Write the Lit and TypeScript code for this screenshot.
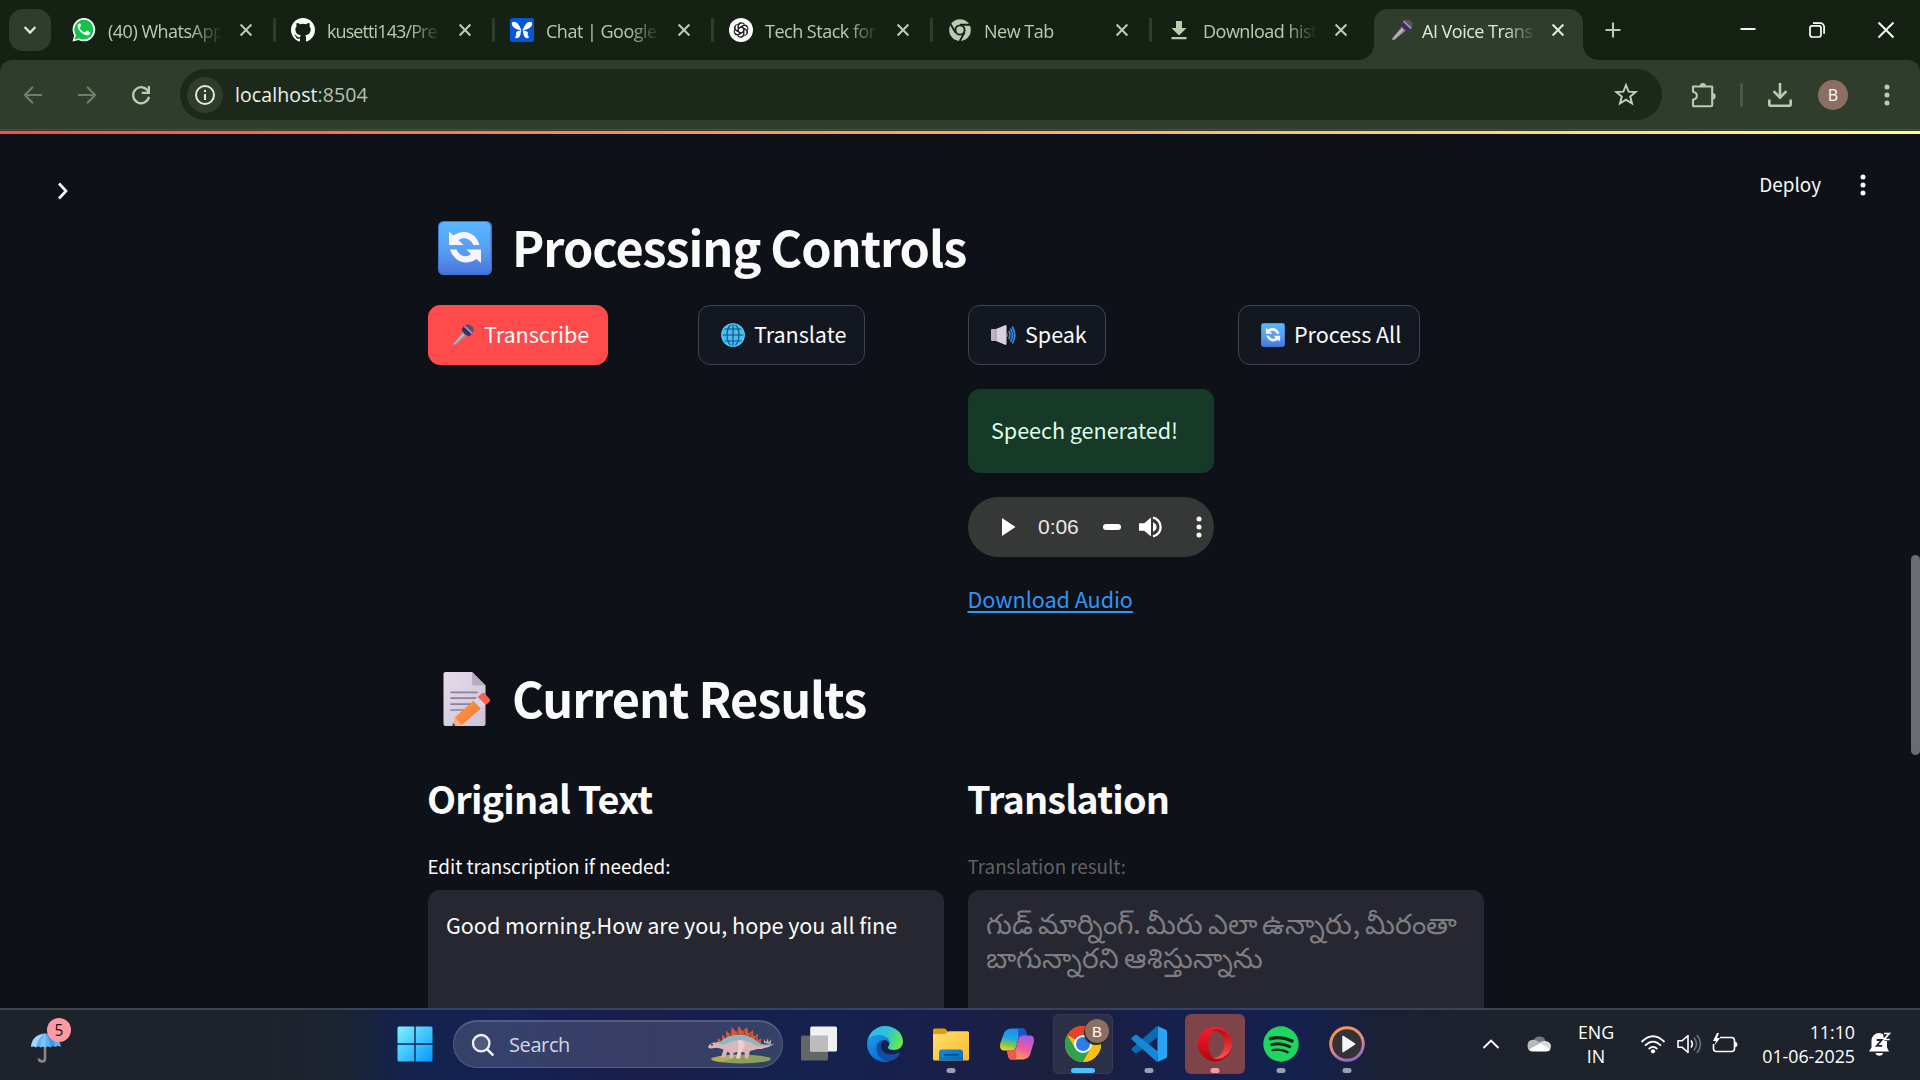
import { LitElement, html, css, svg } from "lit";
import { customElement } from "lit/decorators.js";
import { classMap } from "lit/directives/class-map.js";

const micArt = svg`
  <path d="M2.2 21.8 Q1.6 21 2.4 20 L12 8.4 L16 12.2 L5 21.6 Q3 22.8 2.2 21.8z" fill="#998f9d"/>
  <path d="M3 21 L13 9.6 L14.4 10.8 L4.2 21.2z" fill="#c4bcc8"/>
  <circle cx="17" cy="7" r="5.6" fill="#54465f"/>
  <path d="M12.4 4 L20.3 11.6 L17.6 13.4 L10.6 6.8z" fill="#3f2a63"/>
  <path d="M13.4 3 L21.2 10.4" stroke="#a79bb5" stroke-width="1.5"/>
  <path d="M15.5 2.4 L22 8.6 M18 1.6 L22.4 6" stroke="#75677f" stroke-width=".8"/>`;

const syncArt = svg`
  <defs>
    <linearGradient id="sy" x1="0" y1="0" x2="0" y2="1"><stop offset="0" stop-color="#5ab8ff"/><stop offset=".6" stop-color="#559cf3"/><stop offset="1" stop-color="#4a77dc"/></linearGradient>
  </defs>
  <rect x="0" y="0" width="54" height="54" rx="5.5" fill="#3f74d6"/>
  <rect x="1" y="1" width="51.5" height="50.5" rx="5" fill="url(#sy)"/>
  <path d="M11 10.5 L15.6 14.6 C23.5 8.5 37 9.500 41.500 24 L35.500 24 C32.500 17 25 15.500 20.500 19.200 L25.500 24 L11 24z" fill="#fbf3ff"/>
  <path d="M43 42 L38.400 37.900 C30.500 44 17 43 12 28.500 L18.500 28.500 C21.500 35.500 28.500 37 33 33 L28.500 28.500 L43 28.500z" fill="#fbf3ff"/>`;

const art = {
  whatsapp: html`<svg width="24" height="24" viewBox="0 0 24 24"><path d="M.5 23.600 L2.200 17.600 A11.300 11.700 0 1 1 6.500 21.900z" fill="#fff"/><path d="M2.400 21.700 L3.900 17.300 A9.500 9.900 0 1 1 7.200 20.400z" fill="#15c14b"/><path d="M8.700 6.300c-.4-.9-.9-.8-1.300-.8-.9.200-2 1.500-1.700 3.200.5 3.200 4.700 7.700 8.600 8.500 2 .4 3.600-.8 3.800-2 .1-.8.100-1-.4-1.300l-2.500-1.200c-.5-.2-.8 0-1.100.4l-.9 1.100c-.3.300-.5.300-.9.100-2.300-1-3.700-2.600-4.500-4.100-.2-.4 0-.6.200-.9.900-1 .9-1.200.7-1.600z" fill="#fff"/></svg>`,
  github: html`<svg width="24" height="24" viewBox="0 0 16 16"><path fill="#fff" d="M8 0C3.580 0 0 3.580 0 8c0 3.540 2.290 6.530 5.470 7.590.4.070.55-.17.55-.38 0-.19-.01-.82-.01-1.490-2.010.37-2.530-.49-2.690-.94-.09-.23-.48-.94-.82-1.130-.28-.15-.68-.52-.01-.53.63-.01 1.080.58 1.230.82.72 1.210 1.870.87 2.330.66.070-.52.28-.87.51-1.070-1.780-.2-3.640-.89-3.640-3.950 0-.87.31-1.590.82-2.150-.08-.2-.36-1.020.08-2.120 0 0 .67-.21 2.200.82a7.600 7.600 0 0 1 4 0c1.530-1.040 2.200-.82 2.200-.82.44 1.100.16 1.920.08 2.120.51.56.82 1.270.82 2.150 0 3.070-1.870 3.750-3.650 3.950.29.25.54.73.54 1.480 0 1.070-.01 1.930-.01 2.200 0 .21.15.46.55.38A8.010 8.010 0 0 0 16 8c0-4.420-3.580-8-8-8z"/></svg>`,
  butterfly: html`<svg width="24" height="24" viewBox="0 0 24 24"><rect width="24" height="24" rx="2.500" fill="#0557d6"/><g fill="#fff"><path d="M11.600 12.500C9.500 12 2 10.500 1.800 6 1.700 3 5.500 3 7.800 5.700c1.700 2 2.800 4.300 3.800 6.800z"/><path d="M12.400 12.500c2.100-.5 9.600-2 9.800-6.500.1-3-3.700-3-6-.3-1.700 2-2.800 4.300-3.800 6.800z"/><path d="M11.300 12.600c-2-.2-4.600.5-5.200 2.200-.3 1 .6 1.300.2 2.200-.5 1.200-1.600 1.500-1 2.600.8 1.300 3.500.5 4.600-1.600.8-1.600.8-3.400 1.400-5.400z"/><path d="M12.700 12.600c2-.2 4.600.5 5.200 2.200.3 1-.6 1.300-.2 2.200.5 1.200 1.600 1.500 1 2.600-.8 1.300-3.500.5-4.600-1.600-.8-1.600-.8-3.400-1.400-5.400z"/></g></svg>`,
  openai: html`<svg width="24" height="24" viewBox="0 0 24 24"><circle cx="12" cy="12" r="12" fill="#fff"/><g fill="none" stroke="#222" stroke-width="1.150" stroke-linejoin="round">${[0, 60, 120, 180, 240, 300].map(
    (a) => svg`<path transform="rotate(${a} 12 12)" d="M9.300 13.600V8.300a3.300 3.300 0 0 1 6-1.900M9.300 10.400l4.700-2.700a3.300 3.300 0 0 1 4.300 1"/>`
  )}</g></svg>`,
  chromeMono: html`<svg width="24" height="24" viewBox="0 0 24 24"><circle cx="12" cy="12" r="10.800" fill="#b9ccb1"/><circle cx="12" cy="12" r="4.600" fill="#b9ccb1" stroke="#152213" stroke-width="1.900"/><path d="M12 6.700H22M7.500 14.600L2.500 6M16.500 14.600L11.800 23" stroke="#152213" stroke-width="1.900"/></svg>`,
  downloadMono: html`<svg width="24" height="24" viewBox="0 0 24 24"><path d="M9 3h6v7h4.500L12 17.500 4.500 10H9zM4.500 19h15v2.200h-15z" fill="#b9ccb1"/></svg>`,
  mic: html`<svg width="24" height="24" viewBox="0 0 24 24">${micArt}</svg>`,
  close: html`<svg width="18" height="18" viewBox="0 0 18 18"><path d="M3.600 3.600l10.800 10.800M14.400 3.600L3.600 14.400" stroke="currentColor" stroke-width="2.100" fill="none"/></svg>`,
  chevDown: html`<svg width="18" height="18" viewBox="0 0 18 18"><path d="M3.600 6l5.400 5.500L14.400 6" stroke="#dfe8da" stroke-width="2.300" fill="none"/></svg>`,
  plus: html`<svg width="18" height="18" viewBox="0 0 18 18"><path d="M9 1.500v15M1.500 9h15" stroke="#b9ccb1" stroke-width="2.100"/></svg>`,
  back: html`<svg width="24" height="24" viewBox="0 0 24 24"><path d="M21 12H4.500M12 3.800L3.800 12l8.200 8.200" stroke="#6f8069" stroke-width="2" fill="none"/></svg>`,
  forward: html`<svg width="24" height="24" viewBox="0 0 24 24"><path d="M3 12h16.500M12 3.800l8.200 8.200-8.200 8.200" stroke="#6f8069" stroke-width="2" fill="none"/></svg>`,
  reload: html`<svg width="24" height="24" viewBox="0 0 24 24"><path d="M19.300 8.600A8 8 0 1 0 20 13.800" stroke="#b9ccb1" stroke-width="2.300" fill="none"/><path d="M21 3v8h-8.200v-2.200h6V3z" fill="#b9ccb1"/></svg>`,
  info: html`<svg width="22" height="22" viewBox="0 0 22 22"><circle cx="11" cy="11" r="9" stroke="#e3e8df" stroke-width="2" fill="none"/><path d="M11 10v6" stroke="#e3e8df" stroke-width="2"/><circle cx="11" cy="7" r="1.200" fill="#e3e8df"/></svg>`,
  star: html`<svg width="26" height="26" viewBox="0 0 26 26"><path d="M13 3l2.600 6.600 7.100.500-5.500 4.500 1.800 6.900L13 17.700l-6 3.800 1.800-6.900-5.500-4.500 7.100-.5z" stroke="#c6d0c1" stroke-width="1.900" fill="none"/></svg>`,
  puzzle: html`<svg width="26" height="28" viewBox="0 0 26 28"><path d="M3 5.500h19.200v18.800q0 1-1 1H4q-1 0-1-1v-5.500c5.200-1.200 5.200-6.800 0-8z" stroke="#b9ccb1" stroke-width="2.100" fill="none" stroke-linejoin="round"/><path d="M9.700 5a3.100 3.100 0 0 1 6.200 0zM22.500 12a3.100 3.300 0 0 1 0 6.600z" fill="#b9ccb1"/></svg>`,
  download: html`<svg width="26" height="26" viewBox="0 0 26 26"><path d="M13 1v14M6.600 9.200L13 15.600l6.400-6.400" stroke="#b9ccb1" stroke-width="2.600" fill="none"/><path d="M2.300 17.500v4.800q0 1.500 1.500 1.500h18.400q1.500 0 1.500-1.500v-4.800" stroke="#b9ccb1" stroke-width="2.600" fill="none"/></svg>`,
  dots: html`<svg width="8" height="26" viewBox="0 0 8 26"><g fill="currentColor"><circle cx="4" cy="5" r="2.500"/><circle cx="4" cy="13" r="2.500"/><circle cx="4" cy="21" r="2.500"/></g></svg>`,
  minimise: html`<svg width="18" height="18" viewBox="0 0 18 18"><path d="M1.500 8h15" stroke="#fff" stroke-width="1.900"/></svg>`,
  restore: html`<svg width="18" height="18" viewBox="0 0 18 18"><rect x="2" y="4.800" width="11" height="11.200" rx="2.200" stroke="#fff" stroke-width="1.700" fill="none"/><path d="M5 2.200h7.500a3.600 3.600 0 0 1 3.600 3.600v7" stroke="#fff" stroke-width="1.700" fill="none"/></svg>`,
  winClose: html`<svg width="18" height="18" viewBox="0 0 18 18"><path d="M1.500 1.500l15 15M16.500 1.500l-15 15" stroke="#fff" stroke-width="1.900"/></svg>`,
  chevRight: html`<svg width="18" height="22" viewBox="0 0 18 22"><path d="M5 3.500l7 7.500-7 7.500" stroke="#fafafa" stroke-width="2.700" fill="none"/></svg>`,
  syncBig: html`<svg width="54" height="54" viewBox="0 0 54 54">${syncArt}</svg>`,
  syncSmall: html`<svg width="24" height="24" viewBox="0 0 54 54">${syncArt}</svg>`,
  globe: html`<svg width="24" height="24" viewBox="0 0 24 24"><circle cx="12" cy="12" r="11.500" fill="#45bdf8"/><g stroke="#17506f" stroke-width="1.150" fill="none"><path d="M12 1v22M1 12h22M2.800 6h18.400M2.800 18h18.400"/><ellipse cx="12" cy="12" rx="6" ry="11.200"/></g><circle cx="12" cy="12" r="11.200" stroke="#4fc6fb" stroke-width="1.300" fill="none"/></svg>`,
  speakerEmoji: html`<svg width="25" height="22" viewBox="0 0 25 22"><rect x="0" y="5" width="7" height="12" rx="1" fill="#bdb2c4"/><path d="M5 5L14 1.200q1.500-.4 1.500 1v17.600q0 1.400-1.500 1L5 17z" fill="#d9d2de"/><path d="M5 5v12" stroke="#a196aa" stroke-width="1"/><path d="M15.500 8q2.200 3 0 6z" fill="#a89cb2"/><path d="M17.800 7q2.200 4 0 8M19.500 4.500q4 6.500 0 13M21.300 2.500q5 8.500 0 17" stroke="#3c8ee4" stroke-width="1.600" fill="none"/></svg>`,
  memo: html`<svg width="50" height="56" viewBox="0 0 50 56">
    <defs><linearGradient id="pg" x1="0" y1="0" x2="1" y2="1"><stop offset="0" stop-color="#e4dcea"/><stop offset="1" stop-color="#cfc2d8"/></linearGradient>
    <linearGradient id="pn" x1="0" y1="0" x2="1" y2="1"><stop offset="0" stop-color="#ff9a3d"/><stop offset="1" stop-color="#f5763a"/></linearGradient></defs>
    <path d="M2.500 1H29l13.500 13.500V53q0 2-2 2h-38q-2 0-2-2V3q0-2 2-2z" fill="url(#pg)"/>
    <path d="M29 1l13.500 13.500H31q-2 0-2-2z" fill="#b9adc4"/>
    <path d="M8 21.300h26M8 27.200h25M8 33.100h21M8 39h15" stroke="#8d8199" stroke-width="1.700" stroke-linecap="round"/>
    <path d="M9.300 55l2.500-8.500 7 7.600z" fill="#e9b893"/><path d="M9.300 55l.8-3 2.400 2.600z" fill="#402a52"/>
    <path d="M11.800 46.500L30.500 29.800l7.400 7.800L18.800 54.100z" fill="url(#pn)"/>
    <path d="M30.500 29.800l4.300-3.800 7.400 7.800-4.300 3.800z" fill="#d8d4ee"/>
    <path d="M34.800 26l4-3.600q1.500-1.200 2.900.2l5 5.400q1.200 1.500-.2 2.700l-3.600 3.300z" fill="#fb5f4d"/></svg>`,
  play: html`<svg width="14" height="20" viewBox="0 0 14 20"><path d="M0 1l13.500 9L0 19z" fill="#fff"/></svg>`,
  volume: html`<svg width="25" height="24" viewBox="0 0 25 24"><path d="M1 8.300h5.200L13 2.500v19l-6.800-5.800H1z" fill="#fff"/><path d="M15 7.300q3.600 1.700 3.600 4.700t-3.600 4.700z" fill="#fff"/><path d="M15 2.600a9.600 9.600 0 0 1 0 18.800" stroke="#fff" stroke-width="2.300" fill="none"/></svg>`,
  umbrella: html`<svg width="44" height="46" viewBox="0 3 44 46"><path d="M15 16v24.500q0 3-3 3t-3-3" stroke="#8b8583" stroke-width="2.600" fill="none"/><path d="M1 29C2 20 8 15.500 15.500 15.500S30 20 31 29q-3-2.200-5.500 0-3-2-5 .500-2.700-2-5 0-2.700-2-5 0Q8 27.500 6 29.500 3.500 27.500 1 29z" fill="#5fb1f5"/><path d="M15.500 15.500Q8 19 6 29.500 3.500 27.500 1 29 2 20 8 17.500z" fill="#a5d5fd"/><path d="M15.500 15.500q-5 5-5 14 2.300-2 5 0z" fill="#82c4fa"/><path d="M15.500 15.500q4.500 5 5 14 2-2.500 5-.5Q24 19 15.500 15.500z" fill="#3f97ea"/></svg>`,
  windows: html`<svg width="36" height="36" viewBox="0 0 36 36"><defs><linearGradient id="wi" x1="0" y1="0" x2="1" y2="1"><stop offset="0" stop-color="#7df3ff"/><stop offset="1" stop-color="#0697ff"/></linearGradient></defs><path d="M2 .5h15.300v16.800H.5V2Q.5.500 2 .5zM18.700.5H34q1.500 0 1.500 1.500v15.300H18.700zM.5 18.700h16.800v16.800H2q-1.500 0-1.500-1.500zM18.700 18.700h16.800V34q0 1.500-1.500 1.500H18.700z" fill="url(#wi)"/></svg>`,
  magnifier: html`<svg width="24" height="24" viewBox="0 0 24 24"><circle cx="10.200" cy="10.200" r="8.200" stroke="#f0f1f6" stroke-width="2.300" fill="#ffffff22"/><path d="M16.300 16.300l5.200 5.400" stroke="#f0f1f6" stroke-width="2.600" stroke-linecap="round"/></svg>`,
  dino: html`<svg width="68" height="38" viewBox="0 0 68 38">
    <ellipse cx="34" cy="33" rx="30" ry="4.400" fill="#8d9e58"/><path d="M4 33q14-5 30-4.400Q26 32 16 36 6 35 4 33z" fill="#b7a957"/>
    <g fill="#d4583b"><path d="M10 18l1-6 4 3.500 0-7 4.500 4-.5-8 5 4.500.5-8 5 5L32 0l3.500 5.500L40 1l1.500 6.500L46 4l.5 6.500L51 8l-.5 6 4-1.500-1 6z"/></g>
    <g stroke="#7f3022" stroke-width=".8"><path d="M14 16l-.5-3M19 13l-1-4M24 10l-1-4M31 9V4M37 9l.5-4M43 11l1-4M48 14l1-3"/></g>
    <path d="M1 21q2-4.500 7-4.500 5 .5 9-3.500Q25 8.500 34 9q10 .5 17 7.500 5 3.500 16 1.500-7 5-16 5l-8 2-2 7.500h-3l-.5-6-5-1-6 1.500-.5 5.500h-4l1-5-2.500-2-2.500 6h-4l2.500-8Q10 21 6 22.300 1.500 23 1 21z" fill="#d9b6b9"/>
    <path d="M9 17q4 .5 8-4 8-4.500 17-4 10 .5 17 7.500 5 3.500 16 1.500-12 3.500-20 1-6-5-14-5-8 .5-13 3.500-5 2-11-.5z" fill="#88b8c6"/>
    <path d="M31 14q7-1 7 6l-3 4-2 8.500h-4L31 24z" fill="#efcdcb"/>
    <path d="M57 17l0-4 2 3.500L61 12l.5 4.500 3-3L63.500 18" fill="#c4b8aa"/><circle cx="5" cy="18.700" r="1" fill="#352b36"/></svg>`,
  taskview: html`<svg width="36" height="36" viewBox="0 0 36 36"><rect x="0" y="9.500" width="27" height="25" rx="1.500" fill="#656668"/><rect x="9.200" y=".5" width="26.800" height="25" rx="1.500" fill="#f1f1f1"/><path d="M9.200 9.500H27v16H10.700q-1.500 0-1.500-1.500z" fill="#bcbcbc"/></svg>`,
  edge: html`<svg width="36" height="36" viewBox="0 0 36 36"><defs><linearGradient id="eg" x1="0" y1=".3" x2="1" y2=".6"><stop offset="0" stop-color="#35b8f1"/><stop offset=".5" stop-color="#2cc3d5"/><stop offset="1" stop-color="#6bea49"/></linearGradient><linearGradient id="eb" x1="0" y1="0" x2=".6" y2="1"><stop offset="0" stop-color="#1d9ff0"/><stop offset="1" stop-color="#0a66cf"/></linearGradient></defs>
    <path d="M0 17C1 7 9 0 18 0c10 0 18 7 18 15.500 0 5-4 8.500-9 8.500-4 0-6-1.200-6-2.500 0-1 1.500-2 1.500-4.500C22.500 13 18 9.500 12.500 9.500 6 9.500 1 12 0 17z" fill="url(#eg)"/>
    <path d="M0 18C.5 12.500 6 9 12 9c5.500 0 10.500 3.500 10.500 8 0 .5 0 1-.3 1.500C21.500 15 19 14 17 14c-3.500 0-6.500 3.500-6.500 8 0 7.500 6 13 12.500 13-1.500.6-3.300 1-5 1C8 36 0 28 0 18z" fill="url(#eb)"/>
    <path d="M17 14c-1.500 1-3 3-3 6 0 5 4.500 8.500 10 8.500 3.500 0 6-1 8-2 .9-.3 1.300.3.900 1C31 31.500 27 35 22 35c-6.500 0-12.500-5.500-12.500-12.500C9.500 17 13 14 17 14z" fill="#10509f"/></svg>`,
  explorer: html`<svg width="36" height="36" viewBox="0 0 36 36"><defs><linearGradient id="fo" x1="0" y1="0" x2="1" y2="1"><stop offset="0" stop-color="#ffdf73"/><stop offset="1" stop-color="#fdbb25"/></linearGradient><linearGradient id="fb" x1="0" y1="0" x2="1" y2="1"><stop offset="0" stop-color="#0f8fe0"/><stop offset="1" stop-color="#0966b4"/></linearGradient></defs><path d="M0 4q0-1.500 1.500-1.500H12L15.500 6H34q2 0 2 2v5H0z" fill="#e19d0b"/><path d="M0 9q0-1 1-1h11l4-2.800h18.500q1.500 0 1.500 1.500V33q0 1.500-1.500 1.500H1.500Q0 34.500 0 33z" fill="url(#fo)"/><path d="M6 34.500v-8q0-3 3-3h18q3 0 3 3v8z" fill="url(#fb)"/><path d="M11 28.800h14" stroke="#084a86" stroke-width="1.700"/></svg>`,
  copilot: html`<svg width="36" height="36" viewBox="0 0 36 36"><defs><linearGradient id="c1" x1=".4" y1="0" x2=".2" y2="1"><stop offset="0" stop-color="#1d8df3"/><stop offset=".45" stop-color="#23a9dc"/><stop offset=".75" stop-color="#8cc63f"/><stop offset="1" stop-color="#f5d51b"/></linearGradient><linearGradient id="c2" x1=".7" y1="0" x2=".3" y2="1"><stop offset="0" stop-color="#a25bf0"/><stop offset=".5" stop-color="#ec5b9c"/><stop offset="1" stop-color="#ffa35a"/></linearGradient></defs>
    <path d="M14 2.500h9.500c2 0 3 1.500 3.700 4l.8 3h-4.500c-2.500 0-3.500 1.500-4.200 4L17 21c-.8 2.500-2 3.500-4.500 3.500H5c-3.500 0-4.700-3-3.700-7L4.700 8C6 4 9 2.500 14 2.500z" fill="url(#c1)"/><path d="M19 2.500h4.500c2 0 3 1.500 3.700 4l.8 3h-4.500c-2.500 0-3.500 1-4.200 3z" fill="#1559c9"/>
    <path d="M22 33.500h-9.500c-2 0-3-1.500-3.500-4l-1-5h5c2.500 0 3.700-1 4.300-3.500L19.500 13.500c.8-2.500 2-4 4.500-4h7c3.500 0 4.700 3 3.700 7L31.300 28c-1.300 4-4.300 5.500-9.300 5.500z" fill="url(#c2)"/><path d="M17 33.500h-4.500c-2 0-3-1.500-3.500-4l-1-5h5c2.500 0 3.500-.5 4-2z" fill="#f25a45"/></svg>`,
  chrome: html`<svg width="36" height="36" viewBox="0 0 36 36"><circle cx="18" cy="18" r="18" fill="#fbbf12"/><path d="M18 18L2.400 9A18 18 0 0 1 33.600 9H18z" fill="#e8402f"/><path d="M2.400 9A18 18 0 0 0 18 36l7.800-13.500L18 18 10.200 22.500z" fill="#2fa24c"/><path d="M33.600 9A18 18 0 0 1 18 36l7.800-13.500Q27 17 22 9.500z" fill="#fbbf12"/><circle cx="18" cy="18" r="9" fill="#fff"/><circle cx="18" cy="18" r="7" fill="#2c7cf0"/></svg>`,
  vscode: html`<svg width="36" height="36" viewBox="0 0 36 36"><path d="M1 24.500L4 27q1 .7 2 0l20-15.500V0L.8 22.500Q0 23.600 1 24.500z" fill="#0a6bb3"/><path d="M1 11.500L4 9q1-.7 2 0l21 16.500-1 10.500L.8 13.500Q0 12.400 1 11.500z" fill="#1587d6"/><path d="M26.500.1l8.300 3.700q1.200.6 1.200 2v24.400q0 1.400-1.200 2l-8.300 3.700z" fill="#29a3f2"/></svg>`,
  opera: html`<svg width="36" height="36" viewBox="0 0 36 36"><defs><linearGradient id="op" x1="0" y1="0" x2="0" y2="1"><stop offset="0" stop-color="#ff1b2d"/><stop offset="1" stop-color="#b0060f"/></linearGradient><linearGradient id="oq" x1="0" y1="0" x2="0" y2="1"><stop offset="0" stop-color="#b30b14"/><stop offset="1" stop-color="#ff5450"/></linearGradient></defs><path d="M18 1a17.200 17.200 0 1 0 0 34.400A17.200 17.200 0 0 0 18 1zM19 4.500c5 0 8.200 6 8.200 13.700S24 31.900 19 31.900 11.500 26 11.500 18.200 14 4.500 19 4.500z" fill="url(#op)" fill-rule="evenodd"/><path d="M14 5.300q3-2 6-2c9 1 15 8 15 15s-6 14-15 14.800q-3 0-6-2 3 1.200 6.500 0c3.600-1.800 6.700-6 6.700-12.900S24 6.800 20.500 5.300q-3-1.200-6.500 0z" fill="url(#oq)"/></svg>`,
  spotify: html`<svg width="36" height="36" viewBox="0 0 36 36"><circle cx="18" cy="18" r="17.700" fill="#1fd760"/><g stroke="#11231a" fill="none" stroke-linecap="round"><path d="M7.500 12.700q11-3 21.500 2.300" stroke-width="3.400"/><path d="M8.700 18.700q9.500-2.600 18 2.100" stroke-width="2.800"/><path d="M9.700 24.200q8-2 15 2" stroke-width="2.300"/></g></svg>`,
  media: html`<svg width="36" height="36" viewBox="0 0 36 36"><defs><linearGradient id="me" x1=".3" y1="0" x2=".7" y2="1"><stop offset="0" stop-color="#ff9548"/><stop offset=".5" stop-color="#dd8c87"/><stop offset="1" stop-color="#8f5fd0"/></linearGradient></defs><circle cx="18" cy="18" r="17.800" fill="url(#me)"/><circle cx="18" cy="18" r="14.800" fill="#333335"/><path d="M14 10.500l11.500 7.500L14 25.500z" fill="#f4f4f4" stroke="#f4f4f4" stroke-width="1.500" stroke-linejoin="round"/></svg>`,
  trayUp: html`<svg width="18" height="12" viewBox="0 0 18 12"><path d="M1.500 10L9 2.500l7.500 7.500" stroke="#fff" stroke-width="1.900" fill="none"/></svg>`,
  cloud: html`<svg width="24" height="18" viewBox="0 0 24 18"><path d="M6.500 6A6.300 6.300 0 0 1 18.500 6L12 10z" fill="#77797d"/><path d="M1 14Q-1 5 6 4.800 10 4.800 13 8.500L4 15z" fill="#b9babd"/><path d="M18 6q6 .500 6 5.500l-1 3-12-6Q14 5.500 18 6z" fill="#d9dadb"/><path d="M1.500 14.500L12 9q1.500-.500 3 .300l8.500 5Q22.500 16.500 19 16.500H5.500Q2.500 16.500 1.500 14.500z" fill="#fff"/></svg>`,
  wifi: html`<svg width="26" height="20" viewBox="0 0 26 20"><g stroke="#fff" fill="none" stroke-width="1.800"><path d="M1.500 8q11.500-11.500 23 0M5 11.600q8-8 16 0M8.700 15q4.300-4.300 8.600 0"/></g><circle cx="13" cy="17.300" r="2.100" fill="#fff"/></svg>`,
  trayVol: html`<svg width="26" height="22" viewBox="0 0 26 22"><path d="M2 7.800h4L12 2.500v17L6 14.200H2z" stroke="#fff" stroke-width="1.600" fill="none" stroke-linejoin="round"/><path d="M15 7.500q2.600 3.500 0 7" stroke="#fff" stroke-width="1.600" fill="none"/><path d="M18 4.500q5 6.500 0 13M21 2q7 9 0 18" stroke="#6e7177" stroke-width="1.600" fill="none"/></svg>`,
  battery: html`<svg width="26" height="22" viewBox="0 0 26 22"><path d="M8 4.500h11.500q3 0 3 3v8q0 3-3 3h-15q-3 0-3-3V11" stroke="#fff" stroke-width="1.600" fill="none"/><path d="M23 8.700q2.500.3 2.500 2.800T23 14.300z" fill="#fff"/><path d="M5 0l-4 8h3l-1.500 4.500 5.500-7.500H5L7 0z" fill="#fff"/></svg>`,
  bell: html`<svg width="24" height="26" viewBox="0 0 24 26"><path d="M3.500 9.500A7.500 7.500 0 0 1 11 2q8 .500 8 8v6.500l2 4H1l2.500-4z" fill="#fff"/><path d="M7.500 22h7.500q-.500 2.800-3.700 2.800T7.500 22z" fill="#fff"/><path d="M14.500 1h8v9h-6z" fill="#1f222a"/><path d="M16 2.500h5.300l-5.300 6h5.800" stroke="#fff" stroke-width="1.700" fill="none"/><path d="M8.700 9h5l-5 5.800h5.500" stroke="#1f222a" stroke-width="1.800" fill="none"/></svg>`,
};

type Art = unknown;

@customElement("browser-tabs")
class BrowserTabs extends LitElement {
  static styles = css`
    :host { display: block; font-family: "Open Sans", "Noto Sans", sans-serif; }
    .strip { display: flex; height: 60px; background: #152213; color: #b9ccb1; }
    .menu { width: 42px; height: 42px; margin: 9px 6px 0 9px; border-radius: 14px; background: #303d2d; display: grid; place-items: center; }
    .tab { width: 219px; height: 60px; box-sizing: border-box; padding-left: 15px; display: flex; align-items: center; position: relative; }
    .tab svg { flex: none; display: block; }
    .title { width: 126px; margin: 2px 3px 0 12px; white-space: nowrap; font-size: 18px; line-height: 28px; letter-spacing: -0.5px;
      mask-image: linear-gradient(90deg, #000 82px, transparent 114px); }
    .tight { letter-spacing: -0.9px; }
    .sep { width: 3px; height: 24px; margin-left: 18px; background: #303d2d; border-radius: 1px; }
    .active { width: 209px; height: 51px; margin: 9px 0 0 3px; padding-left: 16px; padding-bottom: 9px; background: #303d2d; border-radius: 14px 14px 0 0; color: #e0e8db; }
    .active .title { margin-left: 8px; margin-right: 1px; }
    .active::before, .active::after { content: ""; position: absolute; bottom: 0; width: 15px; height: 15px; }
    .active::before { left: -15px; background: radial-gradient(circle at 0 0, transparent 14.500px, #303d2d 15px); }
    .active::after { right: -15px; background: radial-gradient(circle at 100% 0, transparent 14.500px, #303d2d 15px); }
    .plus { width: 60px; display: grid; place-items: center; }
    .wins { margin-left: auto; display: flex; }
    .win { width: 69px; display: grid; place-items: center; }
  `;
  private tabs: { icon: Art; title: string; active?: boolean; last?: boolean; tight?: boolean }[] = [
    { icon: art.whatsapp, title: "(40) WhatsApp" },
    { icon: art.github, title: "kusetti143/Pre", tight: true },
    { icon: art.butterfly, title: "Chat | Google" },
    { icon: art.openai, title: "Tech Stack for" },
    { icon: art.chromeMono, title: "New Tab" },
    { icon: art.downloadMono, title: "Download hist", last: true },
    { icon: art.mic, title: "AI Voice Trans", active: true },
  ];
  render() {
    return html`<div class="strip">
      <div class="menu">${art.chevDown}</div>
      ${this.tabs.map(
        (t) => html`<div class=${classMap({ tab: true, active: !!t.active })}>
          ${t.icon}<div class=${classMap({ title: true, tight: !!t.tight })}>${t.title}</div>${art.close}
          ${t.active || t.last ? "" : html`<div class="sep"></div>`}
        </div>`
      )}
      <div class="plus">${art.plus}</div>
      <div class="wins">
        <div class="win">${art.minimise}</div><div class="win">${art.restore}</div><div class="win">${art.winClose}</div>
      </div>
    </div>`;
  }
}

@customElement("browser-toolbar")
class BrowserToolbar extends LitElement {
  static styles = css`
    :host { display: block; background: #152213; font-family: "Open Sans", "Noto Sans", sans-serif; }
    .bar { display: flex; align-items: center; height: 71px; box-sizing: border-box; padding: 0 6px 2px; background: #303d2d; border-radius: 12px 12px 0 0; box-shadow: inset 0 -1px #303d2d, inset 0 -2px #454f42; color: #b9ccb1; }
    .cell { width: 54px; display: grid; place-items: center; }
    .narrow { width: 53px; padding-right: 1px; box-sizing: border-box; }
    .omni { flex: 1; height: 51px; margin: 0 14px 0 12px; border-radius: 26px; background: #1c291a; display: flex; align-items: center; padding: 0 23px 0 7px; }
    .site { width: 36px; height: 36px; border-radius: 50%; background: #303d2d; display: grid; place-items: center; }
    .url { flex: 1; margin-left: 12px; font-size: 19.500px; letter-spacing: 0.1px; color: #b8c1b4; }
    .host { color: #edf1ea; }
    .div { width: 23px; display: grid; place-items: center; }
    .rule { width: 3px; height: 24px; border-radius: 2px; background: #4a5b45; }
    .avatar { width: 30px; height: 30px; border-radius: 50%; background: #8d6e63; color: #fff; display: grid; place-items: center; font: 16px "Open Sans", sans-serif; }
    svg { display: block; }
  `;
  render() {
    return html`<div class="bar">
      <div class="cell">${art.back}</div><div class="cell">${art.forward}</div><div class="cell">${art.reload}</div>
      <div class="omni"><div class="site">${art.info}</div><div class="url"><span class="host">localhost</span>:8504</div>${art.star}</div>
      <div class="cell">${art.puzzle}</div><div class="div"><div class="rule"></div></div>
      <div class="cell">${art.download}</div><div class="cell narrow"><div class="avatar">B</div></div><div class="cell">${art.dots}</div>
    </div>`;
  }
}

@customElement("voice-page")
class VoicePage extends LitElement {
  static styles = css`
    :host { display: block; height: 877px; overflow: hidden; position: relative; background: #0e1117; color: #fafafa; font-family: "Noto Sans CJK SC", "Noto Sans", sans-serif; }
    svg { display: block; flex: none; }
    .stripe { height: 3px; background: linear-gradient(90deg, #ff4b4b, #ff8a5b 32%, #ffc06e 66%, #ffff80); }
    .top { display: flex; align-items: center; height: 74px; padding: 27px 53px 0 54px; box-sizing: border-box; }
    .deploy { margin: -1px 38px 0 auto; font-size: 18.900px; line-height: 30px; }
    .chev { margin-top: 12px; }
    .body { width: 1056px; margin-left: 428px; }
    h2 { display: flex; align-items: center; height: 76px; margin: 0; font-size: 48.600px; font-weight: 600; line-height: 76px; letter-spacing: -1.050px; white-space: nowrap; }
    .hicon { width: 53px; margin: 4px 21px 0 10px; }
    .memo { margin-left: 15px; margin-right: 20px; width: 49px; }
    .cols { display: grid; grid-template-columns: repeat(4, 246px); column-gap: 24px; height: 314px; margin-top: 21px; align-items: start; letter-spacing: -0.050px; }
    .col { display: flex; flex-direction: column; align-items: flex-start; gap: 24px; }
    .btn { display: flex; align-items: center; height: 60px; box-sizing: border-box; border: 1px solid #41444c; border-radius: 12px; background: #131720; padding: 0 18px 2px 22px; gap: 9px; font-size: 21.600px; line-height: 32px; white-space: nowrap; }
    .primary { background: #ff4b4b; border-color: #ff4b4b; }
    .btn svg { margin-top: 1px; }
    .ok { width: 246px; height: 84px; box-sizing: border-box; padding: 25px 23px; border-radius: 12px; background: #173928; color: #dffde9; font-size: 21.600px; line-height: 32px; white-space: nowrap; }
    .audio { width: 246px; height: 60px; box-sizing: border-box; border-radius: 30px; background: #363737; display: flex; align-items: center; padding: 0 11px 0 34px; }
    .time { font: 21px "Liberation Sans", Arial, sans-serif; width: 65px; margin-left: 22px; color: #e8e8e8; }
    .track { width: 18px; height: 6px; border-radius: 3px; background: #fff; margin-right: 17px; }
    .audio .dots { margin-left: auto; }
    .link { margin-left: -0.500px; color: #3295f4; font-size: 21.600px; line-height: 36px; text-decoration: underline; text-decoration-thickness: 2px; text-underline-offset: 3px; white-space: nowrap; }
    .second { margin-top: 40px; }
    .pair { display: grid; grid-template-columns: 516px 516px; column-gap: 24px; margin-top: 38px; }
    h3 { margin: 0 0 0 -1px; font-size: 37.800px; line-height: 50px; font-weight: 600; white-space: nowrap; letter-spacing: -0.820px; }
    .label { margin: 28px 0 0 -0.500px; font-size: 18.900px; line-height: 30px; white-space: nowrap; letter-spacing: -0.050px; }
    .dim { color: #606266; }
    .area { margin-top: 9px; height: 140px; box-sizing: border-box; padding: 18px 18px 0 18px; border-radius: 12px; background: #262730; font-size: 21.600px; line-height: 34px; letter-spacing: -0.050px; }
    .off { color: #7d7d82; padding-top: 15px; padding-right: 8px; font-size: 28.200px; letter-spacing: 0; word-spacing: -1.400px; }
    .scroll { position: absolute; right: 0; top: 424px; width: 9px; height: 200px; border-radius: 5px; background: #6b6c70; }
  `;
  render() {
    return html`
      <div class="stripe"></div>
      <div class="top"><div class="chev">${art.chevRight}</div><div class="deploy">Deploy</div>${art.dots}</div>
      <div class="body">
        <h2><span class="hicon">${art.syncBig}</span><span>Processing Controls</span></h2>
        <div class="cols">
          <div class="col"><div class="btn primary">${art.mic}<span>Transcribe</span></div></div>
          <div class="col"><div class="btn">${art.globe}<span>Translate</span></div></div>
          <div class="col">
            <div class="btn">${art.speakerEmoji}<span>Speak</span></div>
            <div class="ok">Speech generated!</div>
            <div class="audio">${art.play}<span class="time">0:06</span><span class="track"></span>${art.volume}<span class="dots">${art.dots}</span></div>
            <div class="link">Download Audio</div>
          </div>
          <div class="col"><div class="btn">${art.syncSmall}<span>Process All</span></div></div>
        </div>
        <h2 class="second"><span class="hicon memo">${art.memo}</span><span>Current Results</span></h2>
        <div class="pair">
          <div><h3>Original Text</h3><div class="label">Edit transcription if needed:</div><div class="area">Good morning.How are you, hope you all fine</div></div>
          <div><h3>Translation</h3><div class="label dim">Translation result:</div><div class="area off">గుడ్ మార్నింగ్. మీరు ఎలా ఉన్నారు, మీరంతా బాగున్నారని ఆశిస్తున్నాను</div></div>
        </div>
      </div>
      <div class="scroll"></div>`;
  }
}

@customElement("task-bar")
class TaskBar extends LitElement {
  static styles = css`
    :host { display: block; font-family: "Open Sans", "Noto Sans", sans-serif; color: #fff; }
    svg { display: block; flex: none; }
    .bar { display: flex; height: 72px; box-sizing: border-box; border-top: 2px solid #ffffff26; padding-bottom: 2px; align-items: center;
      background: linear-gradient(90deg, #1e232b 0, #1e232b 270px, #1b2433 340px, #14224c 400px, #142254 500px, #1a1e4a 650px, #142250 780px, #191f4a 950px, #1e1f3c 1060px, #14204e 1180px, #13214f 1290px, #1b2036 1380px, #1e222c 1500px, #1e222a 100%); }
    .weather { width: 352px; padding-left: 30px; position: relative; }
    .badge { position: absolute; left: 47px; top: -3px; width: 24px; height: 24px; border-radius: 50%; background: #ff99a4; color: #111; font-size: 15.500px; line-height: 24px; text-align: center; }
    .app { width: 66px; height: 68px; display: grid; place-items: center; position: relative; }
    .start { margin-right: 5px; }
    .search { width: 330px; height: 48px; box-sizing: border-box; border: 1px solid #ffffff26; border-top-width: 2px; border-radius: 24px; background: #ffffff24; display: flex; align-items: center; margin-right: 3px; padding: 0 7px 0 17px; font-size: 20px; color: #d2d6e2; letter-spacing: -0.4px; }
    .search span { flex: 1; margin-left: 14px; }
    .tile { width: 60px; height: 60px; border-radius: 6px; display: grid; place-items: center; }
    .hl { background: #2b2f48; box-shadow: inset 0 0 0 1px #363a52; }
    .alert { background: #7f444a; }
    .mark { position: absolute; bottom: 5px; left: 50%; translate: -50% 0; width: 9px; height: 5px; border-radius: 3px; background: #9b9eae; }
    .wide { width: 24px; background: #4cc2ff; }
    .pink { background: #ff99a4; }
    .user { position: absolute; left: 35px; top: 9px; width: 24px; height: 24px; border-radius: 50%; background: #8d6e63; font: 15px "Liberation Sans", sans-serif; display: grid; place-items: center; box-shadow: -1px 2px 1px #1b2a1c; }
    .tray { display: flex; align-items: center; margin-left: 87px; font-size: 17.800px; line-height: 24px; }
    .c48 { width: 48px; display: grid; place-items: center; }
    .lang { width: 66px; text-align: center; margin-right: 6px; }
    .c36 { width: 36px; display: grid; place-items: center; }
    .clock { width: 112px; text-align: right; margin-right: 13px; }
  `;
  private apps: { icon: Art; mark?: string; tile?: string; user?: boolean }[] = [
    { icon: art.taskview },
    { icon: art.edge },
    { icon: art.explorer, mark: "mark" },
    { icon: art.copilot },
    { icon: art.chrome, mark: "mark wide", tile: "hl", user: true },
    { icon: art.vscode, mark: "mark" },
    { icon: art.opera, mark: "mark pink", tile: "alert" },
    { icon: art.spotify, mark: "mark" },
    { icon: art.media, mark: "mark" },
  ];
  render() {
    return html`<div class="bar">
      <div class="weather">${art.umbrella}<div class="badge">5</div></div>
      <div class="app start">${art.windows}</div>
      <div class="search">${art.magnifier}<span>Search</span>${art.dino}</div>
      ${this.apps.map(
        (a) => html`<div class="app"><div class="tile ${a.tile ?? ""}">${a.icon}</div>
          ${a.user ? html`<div class="user">B</div>` : ""}${a.mark ? html`<div class=${a.mark}></div>` : ""}</div>`
      )}
      <div class="tray">
        <div class="c48">${art.trayUp}</div><div class="c48">${art.cloud}</div>
        <div class="lang">ENG<br />IN</div>
        <div class="c36">${art.wifi}</div><div class="c36">${art.trayVol}</div><div class="c36">${art.battery}</div>
        <div class="clock">11:10<br />01-06-2025</div>${art.bell}
      </div>
    </div>`;
  }
}

@customElement("app-root")
class AppRoot extends LitElement {
  static styles = css`
    :host { display: flex; flex-direction: column; width: 1920px; height: 1080px; overflow: hidden; background: #0e1117; }
  `;
  render() {
    return html`<browser-tabs></browser-tabs><browser-toolbar></browser-toolbar><voice-page></voice-page><task-bar></task-bar>`;
  }
}
